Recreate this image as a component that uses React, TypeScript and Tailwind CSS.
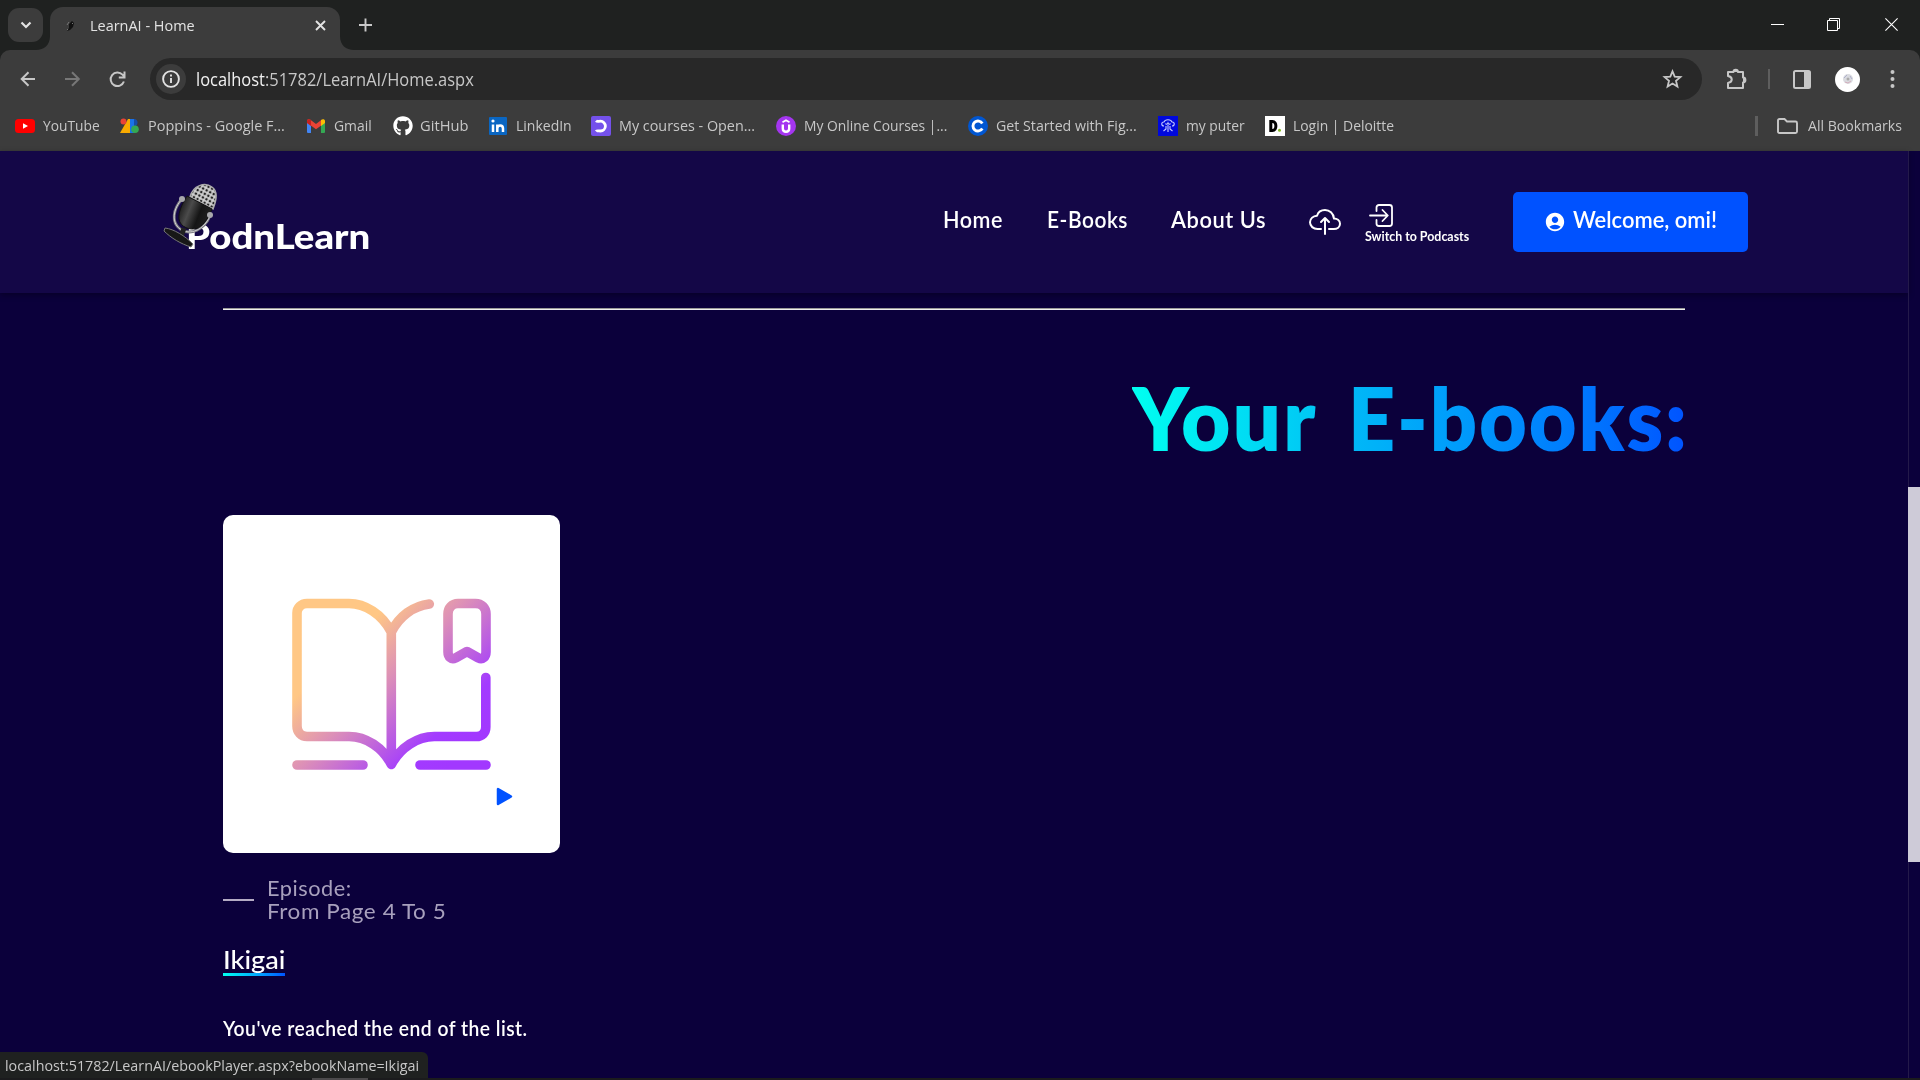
import React, { useLayoutEffect, useRef, useState } from "react";
import { FaGithub } from "react-icons/fa";
import { MdAccountCircle } from "react-icons/md";
import { IoCloudUploadOutline } from "react-icons/io5";

const ui = "font-['Open_Sans','Noto_Sans',sans-serif]";
const site = "font-['Lato',sans-serif]";

/** Text condensed or expanded to fill the width of its box. */
function Fit({ box, text = "", children }: { box: string; text?: string; children: React.ReactNode }) {
  const outer = useRef<HTMLSpanElement>(null);
  const inner = useRef<HTMLSpanElement>(null);
  const [scale, setScale] = useState(1);
  useLayoutEffect(() => {
    if (outer.current && inner.current) {
      setScale(outer.current.clientWidth / inner.current.offsetWidth);
    }
  }, []);
  return (
    <span ref={outer} className={`block shrink-0 whitespace-nowrap ${box}`}>
      <span ref={inner} className={`inline-block origin-left ${text}`} style={{ transform: `scaleX(${scale})` }}>
        {children}
      </span>
    </span>
  );
}

function TabStrip() {
  return (
    <div className="flex h-[50px] shrink-0 bg-[#1f2120] pl-2">
      <div className="mt-2 flex h-[34px] w-[35px] items-center justify-center rounded-[11px] bg-[#3c3c3c]">
        <svg width="12" height="8" viewBox="0 0 12 8" fill="none" stroke="#e3e3e3" strokeWidth="2.2"><path d="M1.5 1.5 6 6l4.500-4.500" /></svg>
      </div>
      <div className="ml-[-7px] flex items-end">
        <svg width="14" height="14" viewBox="0 0 14 14" fill="#3c3c3c"><path d="M14 0v14H0C8 14 14 9 14 0Z" /></svg>
      </div>
      <div className="mt-[7px] flex h-[43px] w-[290px] items-center rounded-t-[13px] bg-[#3c3c3c] pb-4 pt-[11px] pl-4">
        <svg width="9" height="10" viewBox="0 0 9 10"><path d="M3 3 6 0l2 2-1 4-3 3-3 1 2-3z" fill="#111" /><path d="m1 4 2-3M1 8l1 1M6 2l1 1" stroke="#777" /></svg>
        <Fit box={`-mt-0.5 ml-[15px] w-[105px] h-5 text-[15px] leading-5 text-[#e3e3e3] ${ui}`}>LearnAI - Home</Fit>
        <svg className="ml-[120px] -mt-px" width="11" height="11" viewBox="0 0 11 11" stroke="#e3e3e3" strokeWidth="1.900"><path d="m1 1 9 9M10 1l-9 9" /></svg>
      </div>
      <div className="flex items-end">
        <svg width="14" height="14" viewBox="0 0 14 14" fill="#3c3c3c"><path d="M0 0v14h14C6 14 0 9 0 0Z" /></svg>
      </div>
      <svg className="ml-[5px] mt-[18px]" width="13" height="14" viewBox="0 0 13 14" stroke="#c9c9c9" strokeWidth="1.900"><path d="M6.500 .5v13M0 7h13" /></svg>
      <div className="ml-auto mr-[22px] mt-[18px] flex h-[13px] items-center">
        <svg width="13" height="13" viewBox="0 0 13 13" stroke="#fff"><path d="M0 6.500h13" /></svg>
        <svg className="ml-[43px]" width="13" height="13" viewBox="0 0 13 13" stroke="#fff" fill="none"><path d="M.5 2.500h10v10h-10zM2.500 2.500v-2h10v10h-2" /></svg>
        <svg className="ml-[45px]" width="13" height="13" viewBox="0 0 13 13" stroke="#fff" strokeWidth="1.100"><path d="m.4.4 12.200 12.200M12.600.4.4 12.600" /></svg>
      </div>
    </div>
  );
}

function Toolbar() {
  return (
    <div className="flex h-[58px] items-center">
      <svg className="ml-5" width="16" height="16" viewBox="0 0 16 16" fill="none" stroke="#c7c7c7" strokeWidth="2"><path d="M15 8H2M8.500 1.200 1.700 8l6.800 6.800" /></svg>
      <svg className="ml-[29px]" width="16" height="16" viewBox="0 0 16 16" fill="none" stroke="#777" strokeWidth="2"><path d="M0 8h13.500M7 1.200 13.800 8 7 14.800" /></svg>
      <svg className="ml-[28px]" width="17" height="17" viewBox="0 0 17 17" fill="none" stroke="#c7c7c7" strokeWidth="2"><path d="M14.900 10.500A6.800 6.800 0 1 1 13.500 3.700L15 5.300M15.500 .5v6H9.800" /></svg>
      <div className="ml-[24px] flex h-[42px] w-[1552px] items-center rounded-full bg-[#282828] pl-1.5">
        <div className="flex size-[30px] items-center justify-center rounded-full bg-[#3c3c3c]">
          <svg width="18" height="18" viewBox="0 0 18 18" fill="none" stroke="#e3e3e3" strokeWidth="1.900"><circle cx="9" cy="9" r="7.900" /><path d="M9 8v5M9 4.600v2" /></svg>
        </div>
        <Fit box={`ml-[10px] w-[278px] h-6 text-[18px] leading-6 text-[#c7c7c7] ${ui}`}>
          <span className="text-[#f1f1f1]">localhost</span>:51782/LearnAI/Home.aspx
        </Fit>
        <svg className="ml-auto mr-[19px]" width="21" height="20" viewBox="0 0 21 20" fill="none" stroke="#c7c7c7" strokeWidth="1.800"><path d="m10.500 2.300 2.200 5.400 5.700.4-4.400 3.700 1.400 5.700-4.900-3-4.900 3 1.400-5.700-4.400-3.700 5.700-.4z" /></svg>
      </div>
      <svg className="ml-6" width="22" height="22" viewBox="0 0 22 22"><path d="M2 4h5.500a2.200 2.200 0 0 1 4.400 0H17v5.600a2.400 2.400 0 0 1 0 4.800V20H2v-5c5-1 5-6 0-7z" fill="none" stroke="#c7c7c7" strokeWidth="2" strokeLinejoin="round" /><path d="M7 4a2.500 2.500 0 0 1 5 0zM17 9.500a2.400 2.400 0 0 1 0 5z" fill="#c7c7c7" /></svg>
      <div className="ml-[20px] h-5 w-0.5 bg-[#5e5e5e]" />
      <svg className="ml-[23px]" width="18" height="19" viewBox="0 0 18 19"><rect x="1" y="1" width="16" height="17" rx="1.500" fill="none" stroke="#c7c7c7" strokeWidth="2" /><path d="M11 1h6v17h-6z" fill="#c7c7c7" /></svg>
      <div className="ml-6 flex size-[25px] items-center justify-center rounded-full bg-white">
        <svg width="12" height="12" viewBox="0 0 12 12" fill="none"><circle cx="6" cy="6" r="5" fill="#d9dadf" /><path d="M2 5 5 2M8 3l2 3" stroke="#aeb0cc" /><path d="m3 9 3 1 3-2" stroke="#d3aebc" /><circle cx="6" cy="6" r="1.500" fill="#aaa" /></svg>
      </div>
      <svg className="ml-[30px]" width="5" height="18" viewBox="0 0 5 18" fill="#c7c7c7"><circle cx="2.500" cy="2" r="2" /><circle cx="2.500" cy="9" r="2" /><circle cx="2.500" cy="16" r="2" /></svg>
    </div>
  );
}

const bookmarks = [
  { name: "YouTube", w: "w-[57px] mr-[-1px]", icon: <svg width="20" height="20" viewBox="0 0 20 20"><rect y="3" width="20" height="14" rx="3.500" fill="#f00" /><path d="m8 7.200 5 2.800-5 2.800z" fill="#fff" /></svg> },
  { name: "Poppins - Google F...", w: "w-[137px]", icon: <svg width="20" height="20" viewBox="0 0 20 20"><path d="M8 3h4v14H0z" fill="#f9ab00" /><path d="M10 3h4a4 4 0 0 1 1 7v7h-5z" fill="#1a73e8" /><path d="M14 3a3.500 3.500 0 0 1 0 7z" fill="#174ea6" /><circle cx="15" cy="13.300" r="3.800" fill="#34a853" /><circle cx="3.500" cy="5.500" r="3" fill="#ea4335" /></svg> },
  { name: "Gmail", w: "w-[38px] mr-[-1px]", icon: <svg width="20" height="20" viewBox="0 0 20 20"><path d="M1 5h4v12H2a1 1 0 0 1-1-1z" fill="#4285f4" /><path d="M15 5h4v11a1 1 0 0 1-1 1h-3z" fill="#34a853" /><path d="M1 5c0-2 2-2.300 3.400-1.200L10 8l5.600-4.200v5.400L10 13.300 1 6.800z" fill="#ea4335" /><path d="M1 5v2l4 3V4C3.500 2.500 1 3 1 5z" fill="#c5221f" /><path d="M15 4c1.500-1.500 4-1 4 1v2l-4 3z" fill="#fbbc04" /></svg> },
  { name: "GitHub", w: "w-[48px] mr-[-1px]", icon: <FaGithub className="ml-px -mr-px" size={20} color="#fff" /> },
  { name: "LinkedIn", w: "w-[56px] mr-[-2px]", icon: <svg width="20" height="20" viewBox="0 0 20 20"><rect x="1" y="1" width="18" height="18" rx="1" fill="#0a66c2" /><path d="M5 8.500V16M9.300 16V8.500m0 4c0-4 5.700-4 5.700 0V16" stroke="#fff" strokeWidth="2.500" fill="none" /><circle cx="5" cy="5" r="1.600" fill="#fff" /></svg> },
  { name: "My courses - Open...", w: "w-[136px]", icon: <svg width="20" height="20" viewBox="0 0 20 20"><rect width="20" height="20" rx="2" fill="#7451eb" /><path d="M5 4.800c1 1 2.500.4 4.500.4a4.900 4.900 0 0 1 0 9.800c-2 0-3.500-.8-4.500.4" stroke="#fff" strokeWidth="2.800" fill="none" /></svg> },
  { name: "My Online Courses |...", w: "w-[143px]", icon: <svg width="20" height="20" viewBox="0 0 20 20" fill="none" stroke="#fff"><circle cx="10" cy="10" r="10" fill="#a435f0" stroke="none" /><path d="M6.800 8.500v4c0 4.300 6.400 4.300 6.400 0v-4" strokeWidth="2.400" /><path d="m6.500 6.200 3.500-2 3.500 2" strokeWidth="1.800" /></svg> },
  { name: "Get Started with Fig...", w: "w-[141px]", icon: <svg width="20" height="20" viewBox="0 0 20 20" fill="none"><circle cx="10" cy="10" r="10" fill="#0056d2" /><path d="M14.300 7.500a5 5 0 1 0 0 5" stroke="#fff" strokeWidth="2.900" /></svg> },
  { name: "my puter", w: "w-[59px] mr-[-1px]", icon: <svg width="20" height="20" viewBox="0 0 20 20" fill="none" stroke="#c6cbff" strokeWidth="1.100"><path d="M0 0h20v20H0z" fill="#0008dc" stroke="none" /><path d="M6 10c-3 0-3-4 0-4 1-3 7-3 8 0 3 0 3 4 0 4M7.500 7.500c1 1 2 1 2.500-.5.500 1.500 1.500 1.500 2.500.5M8 10v3l-2.500 2M10 9v7M12 10v3l2.500 2" /></svg> },
  { name: "Login | Deloitte", w: "w-[101px]", icon: <svg width="20" height="20" viewBox="0 0 20 20" fill="none"><path d="M0 0h20v20H0z" fill="#fff" /><path d="M5.800 5.500H7.500c4.500 0 4.500 9 0 9H5.800z" stroke="#000" strokeWidth="3" /><circle cx="14.500" cy="14.200" r="1.500" fill="#86bc25" /></svg> },
];

function Bookmarks() {
  return (
    <div className={`flex h-[36px] items-center gap-[21px] pl-[15px] text-[15px] leading-5 text-[#c7c7c7] ${ui}`}>
      {bookmarks.map((b) => (
        <div key={b.name} className="flex items-center gap-2">
          {b.icon}
          <Fit box={`${b.w} -mt-0.5 h-5`}>{b.name}</Fit>
        </div>
      ))}
      <div className="ml-auto mr-[18px] flex items-center">
        <div className="mr-[19px] h-5 w-[3px] bg-[#5e5e5e]" />
        <svg width="21" height="16" viewBox="0 0 21 16" fill="none" stroke="#c7c7c7" strokeWidth="1.900"><path d="M1 2.500C1 1.500 1.500 1 2.500 1h5L10 3.500h8.500c1 0 1.500.5 1.500 1.500v8.500c0 1-.5 1.500-1.500 1.500h-16C1.500 15 1 14.500 1 13.500z" /></svg>
        <Fit box="-mt-0.5 ml-2.5 w-[94px] h-5">All Bookmarks</Fit>
      </div>
    </div>
  );
}

function Logo() {
  return (
    <div className="relative ml-[186px] h-[24px] w-[185px]">
      <Fit box={`mt-[-9px] w-[184px] h-10 text-[34px] font-black leading-10 text-white ${site}`}>PodnLearn</Fit>
      <svg className="absolute -left-[23px] -top-[33px]" width="56" height="66" viewBox="0 0 56 66" fill="none">
        <defs>
          <pattern id="mesh" width="4" height="4" patternUnits="userSpaceOnUse" patternTransform="rotate(28)">
            <rect width="4" height="4" fill="#d0d0d0" /><circle cx="2" cy="2" r="1.300" fill="#242424" />
          </pattern>
          <linearGradient id="body" x1="0" y1=".2" x2="1" y2=".6"><stop stopColor="#111" /><stop offset=".35" stopColor="#4b4b4b" /><stop offset=".65" stopColor="#151515" /><stop offset="1" stopColor="#222" /></linearGradient>
        </defs>
        <path d="M19 16c-9 10-11 23-2 30 10 7 24 1 30-13" stroke="#77777f" strokeWidth="2.800" />
        <path d="M19 16c-9 10-11 23-2 30 10 7 24 1 30-13" stroke="#d5d5d5" strokeWidth="1" />
        <path d="m21 45-3 9" stroke="#222" strokeWidth="5" />
        <path d="M2 45c9 1 20 8 28 16l-2 3C18 61 8 55 1 48z" fill="#171717" stroke="#777" strokeWidth="1" />
        <path d="M27 14C30 2 42-1 49 4c6 4 5 12 1 22z" fill="url(#mesh)" stroke="#aaa" strokeWidth="1.500" />
        <path d="m24 13 25 13c-3 8-8 16-14 19-8 3-18-1-19-9-1-7 4-17 8-23z" fill="url(#body)" stroke="#111" />
        <circle cx="19" cy="16" r="3" fill="#a9a9ad" /><circle cx="47" cy="32" r="3" fill="#a9a9ad" />
      </svg>
    </div>
  );
}

function SiteHeader() {
  const link = `mt-[-7px] h-7 text-[23px] leading-7 text-white ${site}`;
  return (
    <header className="flex h-[142px] w-[1908px] shrink-0 items-center bg-[#140747] shadow-[0_2px_6px_rgba(0,0,0,0.35)]">
      <div className="pt-[21px]"><Logo /></div>
      <Fit box={`ml-[572px] w-[60px] ${link}`} text="font-semibold tracking-wide">Home</Fit>
      <Fit box={`ml-[44px] w-[81px] ${link}`} text="font-semibold tracking-wide">E-Books</Fit>
      <Fit box={`ml-[43px] w-[95px] ${link}`} text="font-semibold tracking-wide">About Us</Fit>
      <IoCloudUploadOutline className="ml-[43px]" size={32} color="#fff" />
      <div className="ml-[24px] mt-1 flex h-[40px] flex-col">
        <svg className="ml-[4px] shrink-0" width="25" height="23" viewBox="0 0 25 23" fill="none" stroke="#fff" strokeWidth="1.800" strokeLinecap="round" strokeLinejoin="round"><path d="M7.500 7V3.500C7.500 2 8.500 1 10 1h10.500C22 1 23 2 23 3.500v16c0 1.500-1 2.500-2.500 2.500H10c-1.500 0-2.500-1-2.500-2.500V16M1 11.500h17.500M13.500 6l5.300 5.500-5.300 5.500" /></svg>
        <Fit box={`mt-[2px] w-[104px] h-4 text-[12.500px] leading-4 text-white ${site}`} text="font-bold">Switch to Podcasts</Fit>
      </div>
      <div className="ml-[44px] flex h-[60px] w-[235px] items-center rounded-[5px] bg-[#0052ff] pl-[31px]">
        <MdAccountCircle size={22} color="#fff" />
        <Fit box={`ml-[7px] w-[144px] ${link}`} text="font-semibold">Welcome, omi!</Fit>
      </div>
    </header>
  );
}

function BookArt() {
  return (
    <svg className="ml-[68px] mt-[83px] shrink-0" width="202" height="172" viewBox="0 0 202 172" fill="none" stroke="url(#book)" strokeWidth="9.600" strokeLinecap="round" strokeLinejoin="round">
      <defs>
        <linearGradient id="book" gradientUnits="userSpaceOnUse" x1="34" y1="23" x2="170" y2="158">
          <stop offset=".17" stopColor="#ffc785" /><stop offset=".45" stopColor="#dc8fb8" /><stop offset=".83" stopColor="#a33bff" /><stop offset="1" stopColor="#a238ff" />
        </linearGradient>
      </defs>
      <path d="M100.300 34C91 16 74 5.500 58 5.500H16C10 5.500 6 10 6 15v113c0 6 4 10.500 10 10.500h42c17 0 34 11 42.300 28 9-17 26-28 43-28h42c6 0 9.500-4 9.500-9.500V79.500M100.300 34v131M100.300 34c8-16 22-26 38-28" />
      <path d="M157 54V16c0-6 4-10.500 10-10.500h17.500c6 0 10.500 4.500 10.500 10.500v38c0 5-3.500 8-7.500 6L176 53.500 164.500 60c-4 2-7.500-1-7.500-6z" />
      <path d="M6 167.010 72 167M129 167l66 .01" />
    </svg>
  );
}

function Page() {
  return (
    <main className={`flex w-[1908px] flex-1 flex-col pl-[223px] pt-[15px] text-white ${site}`}>
      <div className="h-0.5 w-[1462px] shrink-0 border-t border-[#9a9a9a] bg-[#eee]" />
      <h1 className="mt-[54px] flex w-[1466px] shrink-0 justify-end gap-[30px] text-[88px] font-extrabold leading-[106px] text-transparent">
        <Fit box="h-[106px] w-[186px]" text="bg-linear-to-r from-[#00fff0] to-[#00c6f5] bg-clip-text tracking-[2px]">Your</Fit>
        <Fit box="h-[106px] w-[341px]" text="bg-linear-to-r from-[#00b9f7] to-[#0052ff] bg-clip-text tracking-[2px]">E-books:</Fit>
      </h1>
      <div className="mt-[45px] flex h-[338px] w-[337px] shrink-0 flex-col rounded-[10px] bg-white">
        <BookArt />
        <svg className="ml-[273px] mt-[17px]" width="17" height="19" viewBox="0 0 17 19"><path d="M2 2v15l13-7.500z" fill="#0052ff" stroke="#0052ff" strokeWidth="2.500" strokeLinejoin="round" /></svg>
      </div>
      <div className="mt-[23px] flex shrink-0 items-center text-[22px] leading-[23px] text-[#a8a0bd]">
        <div className="mr-[13px] mt-0.5 h-0.5 w-[31px] bg-[#b4abc4]" />
        <div>
          <Fit box="h-[23px] w-[85px]" text="tracking-wide">Episode:</Fit>
          <Fit box="h-[23px] w-[179px]" text="tracking-wide">From Page 4 To 5</Fit>
        </div>
      </div>
      <div className="mt-[22px] h-[32px] w-[62px] shrink-0 bg-linear-to-r from-[#00fff0] to-[#0052ff] bg-[length:100%_3px] bg-bottom bg-no-repeat">
        <Fit box="h-[30px] w-[63px] text-[25px] leading-[30px]" text="font-medium">Ikigai</Fit>
      </div>
      <Fit box="mt-[38px] h-[28px] w-[305px] text-[20.500px] leading-[28px]" text="font-semibold tracking-wide">You've reached the end of the list.</Fit>
    </main>
  );
}

export default function App() {
  return (
    <div className="relative flex h-[1080px] w-[1920px] flex-col overflow-hidden bg-[#0b003b]">
      <TabStrip />
      <div className="shrink-0 bg-[#1f2120]">
        <div className="h-[101px] rounded-t-[10px] bg-[#3c3c3c]">
          <Toolbar />
          <Bookmarks />
        </div>
      </div>
      <div className="flex h-[927px]">
        <div className="flex w-[1908px] flex-col">
          <SiteHeader />
          <Page />
        </div>
        <div className="flex w-3 flex-col border-l border-[#241a4a] pt-[336px]">
          <div className="-ml-px h-[375px] w-3 bg-[#cecbd8]" />
        </div>
      </div>
      <div className="flex h-0.5 shrink-0 bg-[#1b1b1d] pl-[312px]">
        <div className="h-0.5 w-14 bg-[#4c4a4c]" />
      </div>
      <div className={`absolute bottom-0.5 left-0 h-[26px] w-[428px] rounded-tr-md bg-[#1f2120] pl-[5px] pt-[3px] text-[15px] leading-5 text-[#c7c7c7] ${ui}`}>
        <Fit box="h-5 w-[414px]">localhost:51782/LearnAI/ebookPlayer.aspx?ebookName=Ikigai</Fit>
      </div>
    </div>
  );
}
